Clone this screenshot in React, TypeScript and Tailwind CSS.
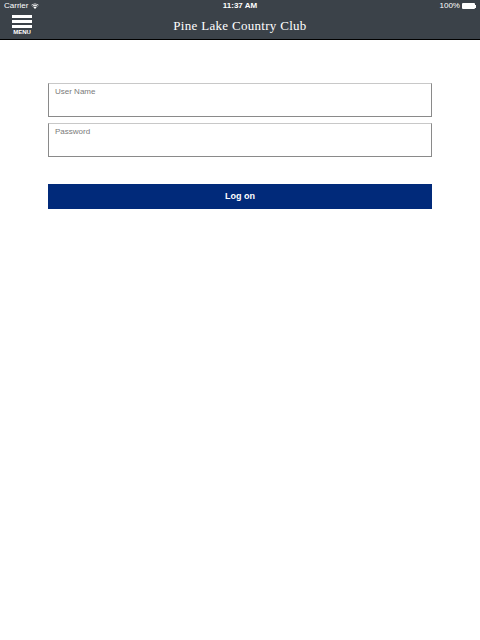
import React from 'react';

const sans = { fontFamily: '"Liberation Sans", Arial, sans-serif' };

const Field = ({label, type}: {label: string; type: string}) => (
    <label className="relative block h-[34px] w-full border border-[#8a8a8a] border-t-[#c8c8c8] bg-white">
        <span className="absolute left-[6px] top-[2px] text-[8px] text-[#7a7a7a]">{label}</span>
        <input type={type} className="h-full w-full bg-transparent px-[6px] pt-[10px] text-[11px] outline-none"/>
    </label>
);

const App: React.FC = () => {
    return (
        <div className="min-h-[640px] w-[480px] bg-white" style={sans}>
            {/* Header */}
            <div className="h-[40px] border-b border-black bg-[#3b4249] text-white">
                {/* Status bar */}
                <div className="flex h-[12px] items-center justify-between px-[4px] text-[8px] leading-none">
                    <div className="flex w-[120px] items-center gap-[3px]">
                        <span>Carrier</span>
                        <svg width="8" height="6" viewBox="0 0 10 8" fill="white">
                            <path d="M5 8 L2.8 5.6 A3.2 3.2 0 0 1 7.2 5.6 Z"/>
                            <path d="M1.5 4.2 A5 5 0 0 1 8.5 4.2 L7.8 4.9 A4 4 0 0 0 2.2 4.9 Z"/>
                            <path d="M0 2.7 A7 7 0 0 1 10 2.7 L9.3 3.4 A6 6 0 0 0 0.7 3.4 Z"/>
                        </svg>
                    </div>
                    <span className="font-bold">11:37 AM</span>
                    <div className="flex w-[120px] items-center justify-end gap-[2px]">
                        <span>100%</span>
                        <div className="flex items-center">
                            <div className="h-[6px] w-[13px] rounded-[1px] bg-white"/>
                            <div className="h-[3px] w-[1px] bg-white"/>
                        </div>
                    </div>
                </div>
                {/* Nav bar */}
                <div className="relative flex h-[27px] items-center justify-center">
                    <div className="absolute left-[12px] top-[3px] flex flex-col items-center">
                        <div className="h-[3px] w-[20px] bg-white"/>
                        <div className="mt-[2px] h-[3px] w-[20px] bg-white"/>
                        <div className="mt-[2px] h-[3px] w-[20px] bg-white"/>
                        <span className="mt-[1px] text-[6px] font-bold leading-none">MENU</span>
                    </div>
                    <span className="pt-[1px] text-[13px] tracking-[0.3px]" style={{fontFamily: '"Liberation Serif", "Times New Roman", serif'}}>
                        Pine Lake Country Club
                    </span>
                </div>
            </div>

            {/* Login form */}
            <div className="flex flex-col px-[48px] pt-[43px]">
                <div className="flex flex-col gap-[6px]">
                    <Field label="User Name" type="text"/>
                    <Field label="Password" type="password"/>
                </div>
                <button className="mt-[27px] h-[25px] w-full bg-[#012a7a] text-[9px] font-bold text-white">
                    Log on
                </button>
            </div>
        </div>
    );
};

export default App;
